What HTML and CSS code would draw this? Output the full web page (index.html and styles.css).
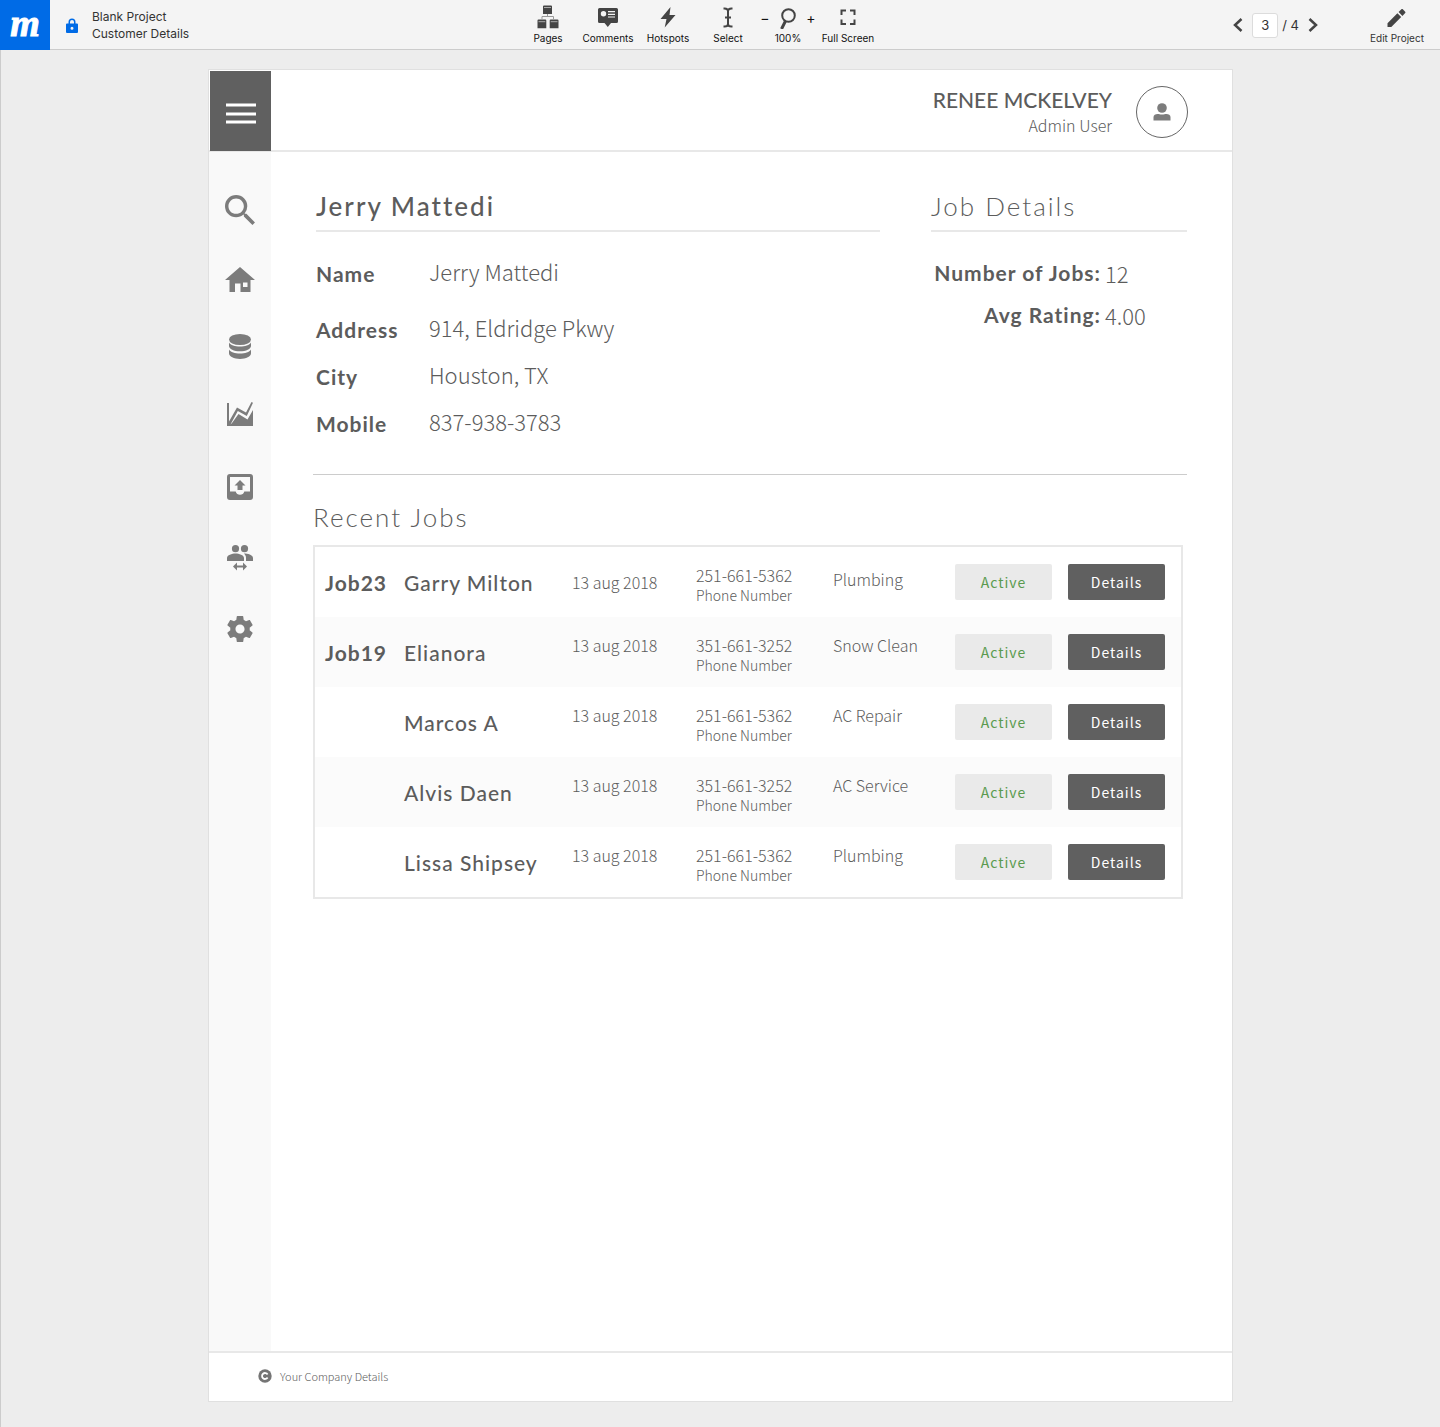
FILE: index.html
```html
<!DOCTYPE html>
<html lang="en">
<head>
<meta charset="utf-8">
<meta name="viewport" content="width=device-width, initial-scale=1">
<title>Customer Details</title>
<link rel="stylesheet" href="styles.css">
</head>
<body>
<header class="toolbar">
  <div class="project">
    <a class="logo" href="#" aria-label="Home">m</a>
    <svg class="lock" viewBox="0 0 12 15" aria-hidden="true"><path fill-rule="evenodd" d="M1 5.500h1.500V4a3.500 3.500 0 0 1 7 0v1.500H11a1 1 0 0 1 1 1V14a1 1 0 0 1-1 1H1a1 1 0 0 1-1-1V6.500a1 1 0 0 1 1-1zM4 5.500h4V4a2 2 0 0 0-4 0zM6 8.700a1.500 1.500 0 1 0 0 3 1.500 1.500 0 0 0 0-3z"/></svg>
    <p class="project-name">Blank Project<br>Customer Details</p>
  </div>
  <div class="tools">
    <button class="tool" type="button">
      <svg viewBox="0 0 22 24"><path d="M6 1.500a1 1 0 0 1 1-1h7a1 1 0 0 1 1 1V9H6zM.500 15.500a1 1 0 0 1 1-1h6.800a1 1 0 0 1 1 1v7.800H.500zM12.700 15.500a1 1 0 0 1 1-1h6.800a1 1 0 0 1 1 1v7.800h-8.800z"/><path d="M7 2.500h7M1.500 16.700h6.800M13.700 16.700h6.800" stroke="#aaa" fill="none"/><path d="M10.500 9v2.500M5 14v-2.500h11.500V14" stroke="#999" fill="none"/></svg>
      Pages
    </button>
    <button class="tool" type="button">
      <svg viewBox="0 0 22 24"><path fill-rule="evenodd" d="M2.500 3h17A1.500 1.500 0 0 1 21 4.500v12a1.500 1.500 0 0 1-1.500 1.500H14l-3.200 4-3.300-4h-5A1.500 1.500 0 0 1 1 16.500v-12A1.500 1.500 0 0 1 2.500 3zM6.500 6a2.700 2.700 0 1 0 0 5.400A2.700 2.700 0 0 0 6.500 6zM11 6v1.200h7V6zm0 2.700v1.200h7V8.700zm0 2.700v1.200h7v-1.200z"/></svg>
      Comments
    </button>
    <button class="tool" type="button">
      <svg viewBox="0 0 22 24"><path d="M13.500 2 3.500 14h6L7.700 22.500 18.500 10h-6z"/></svg>
      Hotspots
    </button>
    <button class="tool" type="button">
      <svg viewBox="0 0 22 24"><path d="M6.500 3.500h1c2 0 3.500 1 3.500 2.500v13c0 1.500-1.500 2.500-3.500 2.500h-1M15.500 3.500h-1C12.500 3.500 11 4.500 11 6v13c0 1.500 1.500 2.500 3.500 2.500h1M8 12.500h6" fill="none" stroke="#444" stroke-width="2"/></svg>
      Select
    </button>
    <div class="zoom">
      <button class="zoom-step" type="button" aria-label="Zoom out">−</button>
      <span class="tool">
        <svg viewBox="0 0 22 24"><circle cx="11.500" cy="10.500" r="6.300" fill="none" stroke="#444" stroke-width="2"/><path d="M8.500 16 4.500 24" stroke="#444" stroke-width="3" fill="none"/></svg>
        100%
      </span>
      <button class="zoom-step" type="button" aria-label="Zoom in">+</button>
    </div>
    <button class="tool" type="button">
      <svg viewBox="0 0 22 24"><path d="M4.500 10V5.500H9M13 5.500h4.500V10M17.500 14.500V19H13M9 19H4.500v-4.500" fill="none" stroke="#444" stroke-width="2"/></svg>
      Full Screen
    </button>
  </div>
  <div class="paging">
    <button class="arrow" type="button" aria-label="Previous page"><svg viewBox="0 0 10 14"><path d="M8.500 1 2 7l6.500 6" fill="none" stroke="#444" stroke-width="2.500"/></svg></button>
    <input class="page-number" type="text" value="3" aria-label="Page">
    <span class="page-total">/ 4</span>
    <button class="arrow" type="button" aria-label="Next page"><svg viewBox="0 0 10 14"><path d="M1.500 1 8 7l-6.500 6" fill="none" stroke="#444" stroke-width="2.500"/></svg></button>
    <button class="tool edit" type="button">
      <svg viewBox="0 0 22 24"><path d="M1.500 18.200V22h3.800L15.200 12.100l-3.800-3.800zM19.200 8.100c.4-.4.4-1 0-1.400L16.800 4.300c-.4-.4-1-.4-1.400 0l-2.800 2.800 3.800 3.800z"/></svg>
      Edit Project
    </button>
  </div>
</header>

<main class="stage">
  <div class="artboard">
    <header class="app-header">
      <button class="menu" type="button" aria-label="Menu"><svg viewBox="0 0 30 22"><path d="M0 2h30M0 11h30M0 19h30" stroke="#fff" stroke-width="3"/></svg></button>
      <div class="user">
        <p class="user-text"><span class="user-name">RENEE MCKELVEY</span><span class="user-role">Admin User</span></p>
        <span class="avatar"><svg viewBox="0 0 18 18"><circle cx="9" cy="5" r="4.800"/><path d="M.500 17.500v-3.500c0-2 2-3 4-3 1.500 0 2.500.600 4.500.600s3-.600 4.500-.600c2 0 4 1 4 3v3.500z"/></svg></span>
      </div>
    </header>

    <div class="app-body">
      <nav class="sidebar" aria-label="Main">
        <div class="nav-group">
          <a href="#" aria-label="Search"><svg width="30" height="30" viewBox="3 3 17.500 17.500"><path d="M15.500 14h-.79l-.28-.27A6.471 6.471 0 0 0 16 9.500 6.500 6.500 0 1 0 9.500 16c1.610 0 3.090-.59 4.230-1.570l.27.28v.79l5 4.990L20.490 19l-4.990-5zm-6 0C7.010 14 5 11.990 5 9.500S7.010 5 9.500 5 14 7.010 14 9.500 11.990 14 9.500 14z"/></svg></a>
          <a href="#" aria-label="Home"><svg width="30" height="25" viewBox="0 0 30 25"><path fill-rule="evenodd" d="M15 0 30 13h-4.500v12H15.500v-8.500H10V25H4.500V13H0zM18 15.500V20h4.500v-4.500z"/></svg></a>
          <a href="#" aria-label="Database"><svg width="22" height="25" viewBox="0 0 22 25"><ellipse cx="11" cy="5.500" rx="11" ry="5.500"/><path d="M0 8.500c1.500 2.600 6 4 11 4s9.500-1.400 11-4V12c0 3-5 5.300-11 5.300S0 15 0 12zM0 15.500c1.500 2.600 6 4 11 4s9.500-1.400 11-4v3.800C22 22.500 17 25 11 25S0 22.500 0 19.300z"/></svg></a>
          <a href="#" aria-label="Charts"><svg width="26" height="26" viewBox="0 0 26 26"><path d="M0 2h2v18.500L10 6.500l9 5L24.500 1l1.500.8L19.800 15l-9-5L3.500 23.500 5 22l6.500-9 9 5.500L26 9v16H0z"/></svg></a>
        </div>
        <div class="nav-group nav-group-wide">
          <a href="#" aria-label="Send"><svg width="26" height="26" viewBox="0 0 26 26"><path fill-rule="evenodd" d="M3 0h20a3 3 0 0 1 3 3v20a3 3 0 0 1-3 3H3a3 3 0 0 1-3-3V3a3 3 0 0 1 3-3zM3 3v14.500h5.700a4.500 4.500 0 0 0 8.600 0H23V3z"/><path d="M13 6l5.500 5.500H15.500V16h-5v-4.500H7.500z"/></svg></a>
          <a href="#" aria-label="Team"><svg width="26" height="26" viewBox="0 0 26 26"><circle cx="8.500" cy="3.700" r="3.600"/><circle cx="17.500" cy="3.700" r="3.600"/><path d="M0 13c0-3 5-4.500 8.500-4.500S17 10 17 13v3H0zM17 8.600C20.500 8.600 26 10 26 13v3h-7v-3c0-1.800-.8-3.300-2-4.400zM6 21.500l4-4v3h6v-3l4 4-4 4v-3h-6v3z"/></svg></a>
          <a href="#" aria-label="Settings"><svg width="26" height="26" viewBox="2 2 20 20"><path d="M19.430 12.980c.04-.32.07-.64.07-.98s-.03-.66-.07-.98l2.110-1.650c.19-.15.24-.42.12-.64l-2-3.460c-.12-.22-.39-.3-.61-.22l-2.490 1c-.52-.4-1.080-.73-1.690-.98l-.38-2.650A.488.488 0 0 0 14 2h-4c-.25 0-.46.18-.49.42l-.38 2.650c-.61.25-1.170.59-1.690.98l-2.490-1c-.23-.09-.49 0-.61.22l-2 3.460c-.13.22-.07.49.12.64l2.110 1.650c-.04.32-.07.65-.07.98s.03.66.07.98l-2.110 1.650c-.19.15-.24.42-.12.64l2 3.460c.12.22.39.3.61.22l2.490-1c.52.4 1.080.73 1.690.98l.38 2.650c.03.24.24.42.49.42h4c.25 0 .46-.18.49-.42l.38-2.650c.61-.25 1.170-.59 1.690-.98l2.490 1c.23.09.49 0 .61-.22l2-3.460c.12-.22.07-.49-.12-.64l-2.110-1.650zM12 15.500c-1.930 0-3.500-1.570-3.500-3.500s1.570-3.500 3.500-3.500 3.500 1.570 3.500 3.500-1.570 3.500-3.500 3.500z"/></svg></a>
        </div>
      </nav>

      <div class="content">
        <div class="summary">
          <section>
            <h1 class="title title-strong">Jerry Mattedi</h1>
            <dl class="contact">
              <dt>Name</dt><dd>Jerry Mattedi</dd>
              <dt>Address</dt><dd>914, Eldridge Pkwy</dd>
              <dt>City</dt><dd>Houston, TX</dd>
              <dt>Mobile</dt><dd>837-938-3783</dd>
            </dl>
          </section>
          <section>
            <h2 class="title">Job Details</h2>
            <dl class="stats">
              <dt>Number of Jobs:</dt><dd>12</dd>
              <dt>Avg Rating:</dt><dd>4.00</dd>
            </dl>
          </section>
        </div>
        <section class="recent">
          <h2 class="title title-plain">Recent Jobs</h2>
          <table class="jobs">
            <colgroup><col class="col-job"><col class="col-name"><col class="col-date"><col class="col-phone"><col class="col-service"><col class="col-action"><col class="col-action"></colgroup>
            <tbody>
              <tr><th scope="row">Job23</th><td class="name">Garry Milton</td><td class="date">13 aug 2018</td><td class="phone">251-661-5362<small>Phone Number</small></td><td class="service">Plumbing</td><td><span class="pill">Active</span></td><td><button class="details" type="button">Details</button></td></tr>
              <tr><th scope="row">Job19</th><td class="name">Elianora</td><td class="date">13 aug 2018</td><td class="phone">351-661-3252<small>Phone Number</small></td><td class="service">Snow Clean</td><td><span class="pill">Active</span></td><td><button class="details" type="button">Details</button></td></tr>
              <tr><td></td><td class="name">Marcos A</td><td class="date">13 aug 2018</td><td class="phone">251-661-5362<small>Phone Number</small></td><td class="service">AC Repair</td><td><span class="pill">Active</span></td><td><button class="details" type="button">Details</button></td></tr>
              <tr><td></td><td class="name">Alvis Daen</td><td class="date">13 aug 2018</td><td class="phone">351-661-3252<small>Phone Number</small></td><td class="service">AC Service</td><td><span class="pill">Active</span></td><td><button class="details" type="button">Details</button></td></tr>
              <tr><td></td><td class="name">Lissa Shipsey</td><td class="date">13 aug 2018</td><td class="phone">251-661-5362<small>Phone Number</small></td><td class="service">Plumbing</td><td><span class="pill">Active</span></td><td><button class="details" type="button">Details</button></td></tr>
            </tbody>
          </table>
        </section>
      </div>
    </div>

    <footer class="app-footer">
      <svg viewBox="0 0 14 14" aria-hidden="true"><circle cx="7" cy="7" r="6.700" fill="#757575"/><path d="M9.600 5.400A3 3 0 1 0 9.600 8.600" fill="none" stroke="#fff" stroke-width="1.800"/></svg>
      Your Company Details
    </footer>
  </div>
</main>
</body>
</html>
```
FILE: styles.css
```css
* { box-sizing: border-box; }

:root {
  --ui: Inter, sans-serif;
  --head: Lato, sans-serif;
  --text: "Noto Sans CJK SC", "Noto Sans", sans-serif;
  --ink: #5c5c5c;
  --line: #e8e8e8;
}

body {
  margin: 0;
  min-height: 100vh;
  display: flex;
  flex-direction: column;
  background: #ededed;
  color: var(--ink);
  font-family: var(--text);
  font-weight: 300;
}

button {
  border: 0;
  padding: 0;
  background: none;
  font: inherit;
  color: inherit;
  cursor: pointer;
}

svg { display: block; }
p, h1, h2, dl, dd { margin: 0; }

/* Viewer toolbar */
.toolbar {
  display: grid;
  grid-template-columns: 1fr auto 1fr;
  height: 50px;
  border-bottom: 1px solid #ccc;
  background: #f4f4f4;
  color: #333;
  font-family: var(--ui);
  font-weight: 400;
}

.project { display: flex; align-items: center; }

.logo {
  width: 50px;
  height: 50px;
  background: #006be6;
  color: #fff;
  font: italic 700 38px/46px "Liberation Serif", serif;
  text-align: center;
  text-decoration: none;
  -webkit-text-stroke: 1px #fff;
}

.lock { width: 12px; height: 15px; margin: 0 14px 0 16px; fill: #006be6; }
.project-name { padding-bottom: 1px; font-size: 12px; line-height: 17px; }

.tools { display: flex; padding-right: 44px; color: #111; }

.tool {
  display: flex;
  flex-direction: column;
  align-items: center;
  width: 60px;
  padding-top: 5px;
  font-size: 10px;
  line-height: 18px;
  white-space: nowrap;
}

.tool svg { width: 22px; height: 24px; fill: #444; }
.zoom { display: flex; width: 60px; justify-content: center; }
.zoom .tool { width: 34px; }
.zoom-step { align-self: flex-start; width: 12px; padding-top: 8px; font-size: 14px; line-height: 20px; }

.paging {
  display: flex;
  align-items: center;
  justify-content: flex-end;
  padding-right: 14px;
  font-size: 13px;
}

.arrow svg { width: 10px; height: 14px; }

.page-number {
  width: 26px;
  height: 25px;
  margin: 0 4px 0 9px;
  padding: 0;
  border: 1px solid #dcdcdc;
  border-radius: 3px;
  background: #fff;
  color: #333;
  font: inherit;
  text-align: center;
}

.page-total { margin-right: 9px; }
.edit { align-self: flex-start; width: 58px; margin-left: 50px; color: #333; }

/* Prototype canvas */
.stage {
  flex: 1;
  display: flex;
  padding: 19px 16px 25px;
  border-left: 1px solid #ccc;
}

.artboard {
  flex: 1;
  display: flex;
  flex-direction: column;
  max-width: 1025px;
  margin: 0 auto;
  border: 1px solid #e0e0e0;
  background: #fff;
}

.app-header {
  display: flex;
  justify-content: space-between;
  align-items: center;
  padding: 1px 44px 0 1px;
  border-bottom: 2px solid var(--line);
}

.menu {
  display: grid;
  place-items: center;
  width: 61px;
  height: 80px;
  margin-bottom: -1px;
  padding-top: 6px;
  background: #606060;
}

.menu svg { width: 30px; height: 22px; }
.user { display: flex; align-items: center; gap: 24px; padding-top: 2px; }
.user-text { text-align: right; }
.user-name { display: block; font: 500 21px/26px var(--head); }
.user-role { display: block; font-size: 16px; line-height: 24px; }

.avatar {
  display: grid;
  place-items: center;
  width: 52px;
  height: 52px;
  border: 1px solid #666;
  border-radius: 50%;
}

.avatar svg { width: 18px; height: 18px; fill: #7c7c7c; }

.app-body { flex: 1; display: flex; }

.sidebar {
  display: flex;
  flex-direction: column;
  gap: 47px;
  width: 62px;
  padding-top: 43px;
  background: #f9f9f9;
}

.nav-group { display: flex; flex-direction: column; align-items: center; gap: 42px; }
.nav-group-wide { gap: 45px; }
.nav-group svg { fill: #7c7c7c; }

.content { flex: 1; padding: 37px 45px 40px 42px; }

.summary {
  display: grid;
  grid-template-columns: 564px 1fr;
  column-gap: 51px;
  padding: 0 0 20px 3px;
  border-bottom: 1px solid #ccc;
}

.title {
  padding-bottom: 7px;
  border-bottom: 2px solid var(--line);
  font: 300 26px/34px var(--head);
  letter-spacing: 2px;
}

.title-strong { font-weight: 500; }
.title-plain { padding: 0; border: 0; }

dt, .jobs th, .name {
  font-family: var(--head);
  font-size: 21px;
  letter-spacing: 1px;
}

dt, .jobs th { font-weight: 700; }
dd { font-size: 22px; }

.contact {
  display: grid;
  grid-template-columns: 113px 1fr;
  grid-template-rows: 56px 47px 47px 47px;
  padding-top: 25px;
  line-height: 34px;
}

.contact dd { line-height: 28px; }

.stats {
  display: grid;
  grid-template-columns: 170px 1fr;
  grid-auto-rows: 42px;
  column-gap: 4px;
  padding-top: 24px;
  line-height: 34px;
}

.stats dt { text-align: right; white-space: nowrap; }

/* Recent jobs */
.recent { padding-top: 25px; }

.jobs {
  width: calc(100% - 4px);
  margin-top: 11px;
  border: 2px solid var(--line);
  border-spacing: 0;
  table-layout: fixed;
}

.jobs tr { height: 70px; }
.jobs tr:nth-child(even) { background: #fbfbfb; }
.jobs td, .jobs th { padding: 0; text-align: left; vertical-align: middle; }
.jobs th { padding-left: 10px; }
.col-job { width: 89px; }
.col-name { width: 168px; }
.col-date { width: 124px; }
.col-phone { width: 137px; }
.col-action { width: 113px; }
.name { font-weight: 500; }
.date, .service, .phone { font-size: 16px; line-height: 20px; }
.jobs .date, .jobs .service { padding-bottom: 14px; }
.jobs tr:first-child .date { padding-bottom: 0; }
.jobs tr:first-child .service { padding-bottom: 6px; }
.jobs .phone { padding-top: 5px; }
.phone small { display: block; font-size: 14px; line-height: 20px; }

.pill, .details {
  display: block;
  width: 97px;
  height: 36px;
  border-radius: 2px;
  font-size: 14px;
  font-weight: 400;
  line-height: 36px;
  letter-spacing: 1px;
  text-align: center;
}

.pill { background: #eaeaea; color: #5a9b4f; }
.details { background: #606060; color: #fff; }

.app-footer {
  display: flex;
  align-items: center;
  gap: 8px;
  height: 50px;
  padding: 0 0 3px 49px;
  border-top: 2px solid var(--line);
  font-size: 11px;
}

.app-footer svg { width: 14px; height: 14px; }
```
